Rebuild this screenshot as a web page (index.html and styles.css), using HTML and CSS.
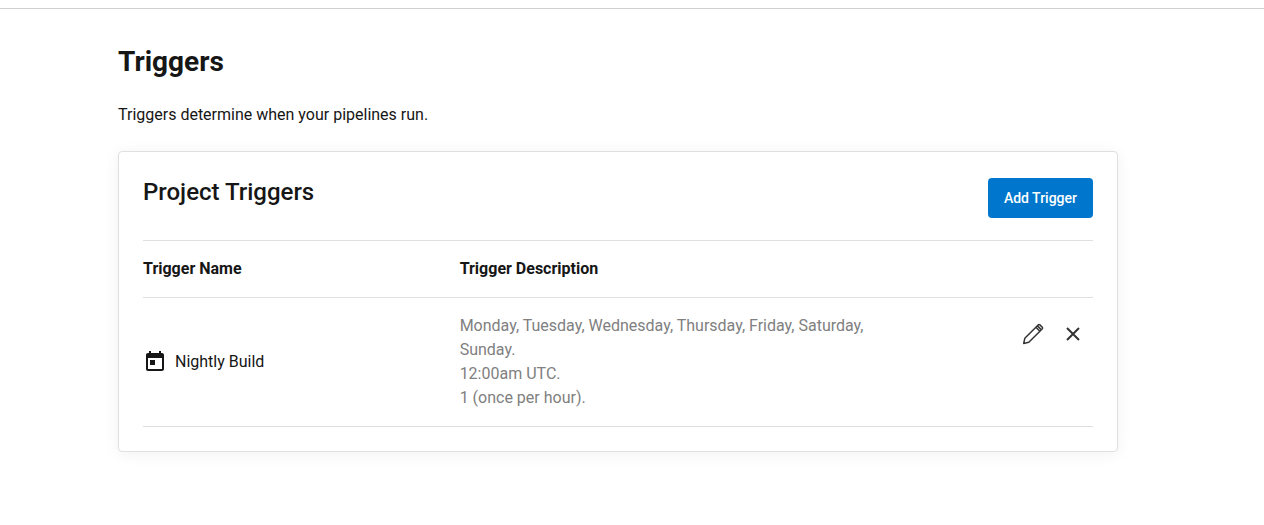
FILE: index.html
```html
<!DOCTYPE html>
<html lang="en">
<head>
<meta charset="utf-8">
<meta name="viewport" content="width=device-width, initial-scale=1">
<title>Triggers</title>
<link rel="stylesheet" href="styles.css">
</head>
<body>
<main class="page">
  <div class="content">
    <h1 class="page-title">Triggers</h1>
    <p class="page-intro">Triggers determine when your pipelines run.</p>
    <section class="card">
      <header class="card-header">
        <h2 class="card-title">Project Triggers</h2>
        <button class="button" type="button">Add Trigger</button>
      </header>
      <table class="triggers">
        <thead>
          <tr>
            <th class="col-name" scope="col">Trigger Name</th>
            <th class="col-description" scope="col">Trigger Description</th>
            <td class="col-actions"></td>
          </tr>
        </thead>
        <tbody>
          <tr>
            <td>
              <div class="trigger-name">
                <svg class="icon" viewBox="0 0 24 24" aria-hidden="true"><path fill="currentColor" d="M19 3h-1V1h-2v2H8V1H6v2H5c-1.110 0-2 .9-2 2v14c0 1.100.89 2 2 2h14c1.100 0 2-.9 2-2V5c0-1.100-.9-2-2-2zm0 16H5V8h14v11zM7 10h5v5H7z"/></svg>
                <span>Nightly Build</span>
              </div>
            </td>
            <td class="description">Monday, Tuesday, Wednesday, Thursday, Friday, Saturday, Sunday.<br>12:00am UTC.<br>1 (once per hour).</td>
            <td class="actions-cell">
              <div class="actions">
                <button class="icon-button" type="button" aria-label="Edit trigger">
                  <svg class="icon" viewBox="0 0 24 24" fill="none" stroke="currentColor" stroke-width="1.500" stroke-linejoin="round" aria-hidden="true"><path d="M2.700 21.400 3.800 16.300 14.900 5.200 18.900 9.200 7.800 20.300zM14.900 5.200 17.300 2.900Q18.100 2.200 18.900 2.900L21.300 5.300Q22 6 21.300 6.800L18.900 9.200M16.500 3.900 20.300 7.700"/></svg>
                </button>
                <button class="icon-button" type="button" aria-label="Delete trigger">
                  <svg class="icon" viewBox="0 0 24 24" fill="none" stroke="currentColor" stroke-width="2" aria-hidden="true"><path d="M6 6 18 18M18 6 6 18"/></svg>
                </button>
              </div>
            </td>
          </tr>
        </tbody>
      </table>
    </section>
  </div>
</main>
</body>
</html>
```
FILE: styles.css
```css
* { box-sizing: border-box; }

body {
  margin: 0;
  background: #fff;
  color: #161616;
  font: 400 16px/24px Roboto, "Liberation Sans", sans-serif;
}

.page {
  margin-top: 8px;
  padding: 32px 28px 48px 0;
  border-top: 1px solid #d0d0d0;
}

.content {
  max-width: 1000px;
  margin: 0 auto;
}

.page-title {
  margin: 0 0 20px;
  font-size: 28px;
  font-weight: 700;
  line-height: 42px;
}

.page-intro { margin: 0 0 24px; }

.card {
  padding: 24px;
  border: 1px solid #e0e0e0;
  border-radius: 4px;
  background: #fff;
  box-shadow: 0 2px 16px rgba(0, 0, 0, 0.06);
}

.card-header {
  display: flex;
  justify-content: space-between;
  align-items: flex-start;
  padding: 2px 0 22px;
}

.card-title {
  margin: 0;
  font-size: 24px;
  font-weight: 500;
  line-height: 28px;
}

.button {
  height: 40px;
  padding: 0 16px;
  border: 0;
  border-radius: 4px;
  background: #0077cc;
  color: #fff;
  font: inherit;
  font-size: 14px;
  font-weight: 500;
}

.triggers {
  width: 100%;
  border-spacing: 0;
  table-layout: fixed;
  text-align: left;
}

.triggers th,
.triggers td {
  padding: 16px 24px 16px 0;
  border-bottom: 1px solid #e0e0e0;
}

.triggers thead th,
.triggers thead td { border-top: 1px solid #e0e0e0; }

.triggers th { font-weight: 700; }

.col-name { width: 33.33%; }
.col-description { width: 50%; }

.trigger-name {
  display: flex;
  align-items: center;
  gap: 8px;
}

.description { color: #808080; }

.triggers .actions-cell {
  padding-right: 0;
  vertical-align: top;
}

.actions {
  display: flex;
  justify-content: flex-end;
}

.icon-button {
  display: flex;
  align-items: center;
  justify-content: center;
  width: 40px;
  height: 40px;
  padding: 0;
  border: 0;
  background: transparent;
  color: #333;
}

.icon {
  flex: none;
  width: 24px;
  height: 24px;
}
```
